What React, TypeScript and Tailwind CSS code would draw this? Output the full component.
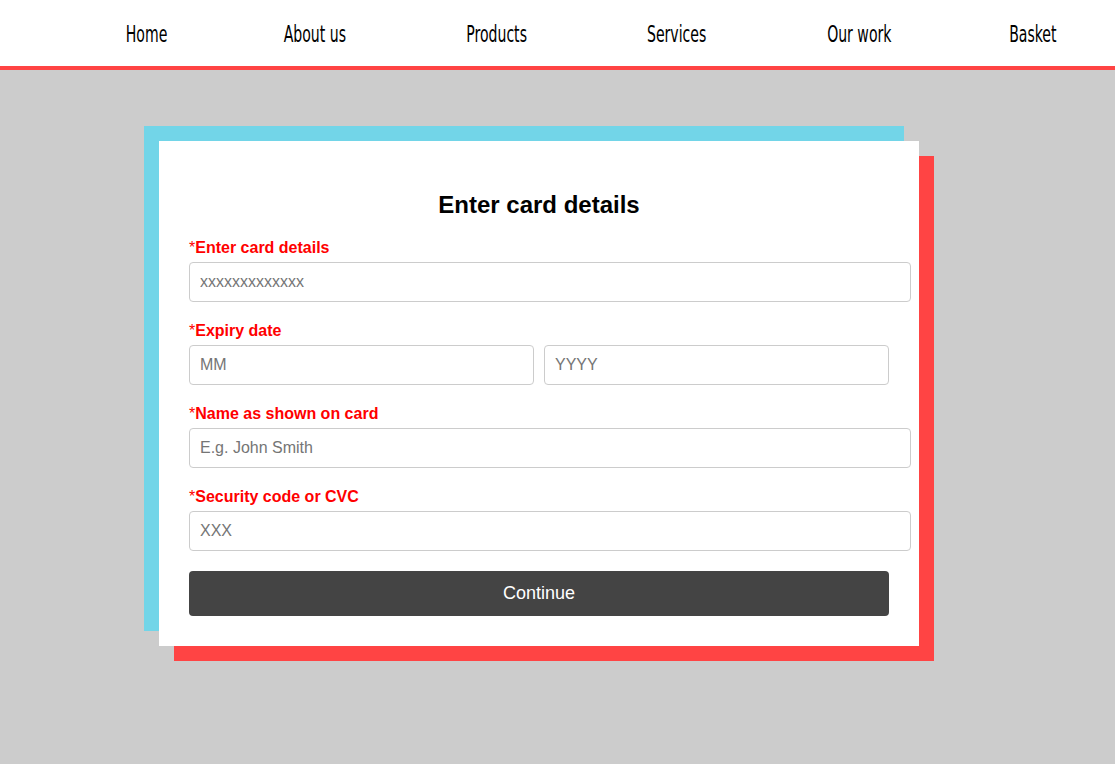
import React from 'react';

const navItems = ['Home', 'About us', 'Products', 'Services', 'Our work', 'Basket'];

const inputCls =
  'box-border h-10 rounded-[4px] border border-[#cccccc] bg-white px-[10px] text-[16px] text-black outline-none placeholder:text-[#757575]';

function Field({ label, children }: { label: string; children: React.ReactNode }) {
  return (
    <div className="mb-[18px]">
      <label className="mb-[5px] block h-5 pt-px text-[16px] font-bold leading-5 text-[#ff0000]">
        <span className="font-normal">*</span>
        {label}
      </label>
      {children}
    </div>
  );
}

export default function App() {
  return (
    <div
      className="min-h-[764px] bg-[#cccccc] pb-[103px]"
      style={{ fontFamily: '"Liberation Sans", Arial, sans-serif' }}
    >
      <nav className="flex h-[70px] items-center justify-between border-b-4 border-[#ff4444] bg-white pl-[116px] pr-[47px] pt-[3px]">
        {navItems.map(item => (
          <a
            key={item}
            href="#"
            className="inline-block scale-x-[0.68] text-[23px] leading-none text-black"
            style={{ fontFamily: '"DejaVu Sans Condensed", "Liberation Sans Narrow", sans-serif' }}
          >
            {item}
          </a>
        ))}
      </nav>

      <div className="ml-[159px] mt-[71px] w-[760px] bg-white px-[30px] pb-[30px] pt-[50px] shadow-[-15px_-15px_0_0_#72d5e8,15px_15px_0_0_#ff4444]">
        <h1 className="mb-[18px] text-center text-[24px] font-bold leading-7 text-black">Enter card details</h1>

        <Field label="Enter card details">
          <input className={`${inputCls} w-[722px]`} placeholder="xxxxxxxxxxxxx" />
        </Field>

        <Field label="Expiry date">
          <div className="flex gap-[10px]">
            <input className={`${inputCls} w-[345px]`} placeholder="MM" />
            <input className={`${inputCls} w-[345px]`} placeholder="YYYY" />
          </div>
        </Field>

        <Field label="Name as shown on card">
          <input className={`${inputCls} w-[722px]`} placeholder="E.g. John Smith" />
        </Field>

        <Field label="Security code or CVC">
          <input className={`${inputCls} w-[722px]`} placeholder="XXX" />
        </Field>

        <button className="mt-5 block h-[45px] w-[700px] rounded-[4px] bg-[#444444] text-[18px] text-white">
          Continue
        </button>
      </div>
    </div>
  );
}
